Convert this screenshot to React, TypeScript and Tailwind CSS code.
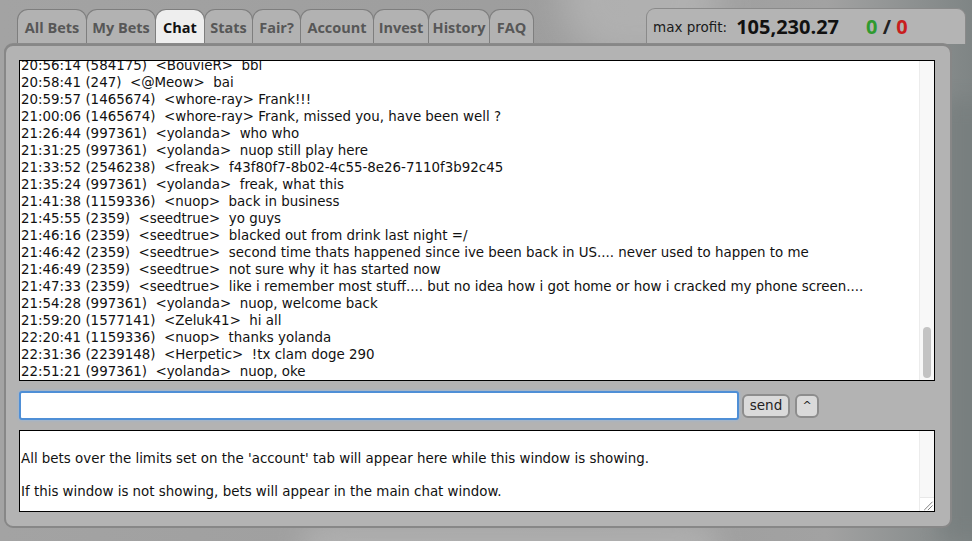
import React from "react";

const tabs = [
  { label: "All Bets", w: "w-[70px]" },
  { label: "My Bets", w: "w-[70px]" },
  { label: "Chat", w: "w-[50px]", active: true },
  { label: "Stats", w: "w-[49px]" },
  { label: "Fair?", w: "w-[49px]" },
  { label: "Account", w: "w-[74px]" },
  { label: "Invest", w: "w-[56px]" },
  { label: "History", w: "w-[62px]" },
  { label: "FAQ", w: "w-[45px]" },
];

const lines = [
  "20:56:14 (584175)  <BouvieR>  bbl",
  "20:58:41 (247)  <@Meow>  bai",
  "20:59:57 (1465674)  <whore-ray> Frank!!!",
  "21:00:06 (1465674)  <whore-ray> Frank, missed you, have been well ?",
  "21:26:44 (997361)  <yolanda>  who who",
  "21:31:25 (997361)  <yolanda>  nuop still play here",
  "21:33:52 (2546238)  <freak>  f43f80f7-8b02-4c55-8e26-7110f3b92c45",
  "21:35:24 (997361)  <yolanda>  freak, what this",
  "21:41:38 (1159336)  <nuop>  back in business",
  "21:45:55 (2359)  <seedtrue>  yo guys",
  "21:46:16 (2359)  <seedtrue>  blacked out from drink last night =/",
  "21:46:42 (2359)  <seedtrue>  second time thats happened since ive been back in US.... never used to happen to me",
  "21:46:49 (2359)  <seedtrue>  not sure why it has started now",
  "21:47:33 (2359)  <seedtrue>  like i remember most stuff.... but no idea how i got home or how i cracked my phone screen....",
  "21:54:28 (997361)  <yolanda>  nuop, welcome back",
  "21:59:20 (1577141)  <Zeluk41>  hi all",
  "22:20:41 (1159336)  <nuop>  thanks yolanda",
  "22:31:36 (2239148)  <Herpetic>  !tx clam doge 290",
  "22:51:21 (997361)  <yolanda>  nuop, oke",
];

function Tab({ label, w, active }: { label: string; w: string; active?: boolean }) {
  return (
    <div
      className={`${w} -ml-px first:ml-0 h-[35px] flex items-center justify-center pt-[1px] rounded-t-[11px] border-[1.5px] border-b-0 border-[#7e7e7e] text-[14.5px] font-bold ${
        active ? "bg-[#eeeeee] text-[#111] relative z-10" : "bg-[#b2b2b2] text-[#575757]"
      }`}
      style={{ fontFamily: '"Open Sans", "DejaVu Sans", sans-serif' }}
    >
      {label}
    </div>
  );
}

export default function App() {
  return (
    <div
      className="w-[972px] h-[541px] overflow-hidden relative bg-[linear-gradient(90deg,#a3a3a3_0%,#9d9d9d_60%,#a2a2a2_85%,#7f8585_100%)]"
      style={{ fontFamily: '"DejaVu Sans", Verdana, sans-serif' }}
    >
      {/* soft blurred backdrop shapes */}
      <div className="absolute left-[560px] top-[-60px] w-[160px] h-[120px] rounded-full bg-[#b8b8b8] blur-[18px] opacity-70" />
      <div className="absolute left-[300px] top-[520px] w-[420px] h-[60px] rounded-full bg-[#b5b5b5] blur-[14px] opacity-70" />
      <div className="absolute left-[940px] top-[100px] w-[60px] h-[440px] bg-[#767d7d] blur-[10px] opacity-70" />

      <div className="relative flex items-end h-[44px] pl-[17px]">
        {tabs.map((t) => (
          <Tab key={t.label} {...t} />
        ))}
        <div className="ml-auto mr-[6px] w-[320px] h-[36px] rounded-t-[9px] border-[1.5px] border-b-0 border-[#8a8a8a] bg-[#b4b4b4] flex items-center pl-[6px] pt-[1px]">
          <span className="text-[13.5px] text-[#1a1a1a]">max profit:</span>
          <span
            className="ml-[9px] text-[20px] font-bold text-[#111]"
            style={{ fontFamily: '"Open Sans", "DejaVu Sans", sans-serif' }}
          >
            105,230.27
          </span>
          <span
            className="ml-[27px] text-[20px] font-bold"
            style={{ fontFamily: '"Open Sans", "DejaVu Sans", sans-serif' }}
          >
            <span className="text-[#2f9a2f]">0</span>
            <span className="text-[#222]"> / </span>
            <span className="text-[#c81e1e]">0</span>
          </span>
        </div>
      </div>

      <div className="relative z-20 ml-[4px] w-[948px] h-[484px] rounded-[9px] border-2 border-[#878787] bg-[#b3b3b3] pt-[14px] pl-[13px] flex flex-col shadow-[0_-1px_0_#8a8a8a]">
        {/* chat log */}
        <div className="w-[916px] h-[321px] border border-black bg-white flex">
          <div className="flex-1 overflow-hidden flex flex-col justify-end pl-[1px] text-[13.4px] leading-[17px] text-[#111]">
            {lines.map((l, i) => (
              <div key={i} className="whitespace-pre">
                {l}
              </div>
            ))}
          </div>
          <div className="w-[15px] bg-[#f8f8f8] border-l border-[#ececec] flex flex-col justify-end items-center pb-[2px]">
            <div className="w-[8px] h-[51px] rounded-full bg-[#c3c3c3]" />
          </div>
        </div>

        {/* input row */}
        <div className="flex items-center mt-[10px] h-[29px]">
          <div className="w-[720px] h-[29px] rounded-[3px] border-2 border-[#4f8fd6] bg-white shadow-[0_0_3px_#8cb8ea]" />
          <button className="ml-[3px] w-[48px] h-[24px] rounded-[6px] border-2 border-[#8d8d8d] bg-[#dadada] text-[13.5px] text-[#222] leading-none">
            send
          </button>
          <button className="ml-[5px] w-[24px] h-[24px] rounded-[6px] border-2 border-[#8d8d8d] bg-[#dadada] text-[11px] text-[#222] leading-none">
            ^
          </button>
        </div>

        {/* big bets box */}
        <div className="mt-[10px] w-[916px] h-[82px] border border-black bg-white flex">
          <div className="flex-1 pt-[19px] pl-[1px] text-[13.4px] leading-[17px] text-[#111]">
            <div>All bets over the limits set on the 'account' tab will appear here while this window is showing.</div>
            <div className="mt-[16px]">If this window is not showing, bets will appear in the main chat window.</div>
          </div>
          <div className="w-[15px] bg-[#f8f8f8] border-l border-[#ececec] flex flex-col justify-end">
            <svg width="14" height="14" viewBox="0 0 14 14" className="bg-white border-t border-[#e8e8e8]">
              <line x1="4" y1="13" x2="13" y2="4" stroke="#777" strokeWidth="1" />
              <line x1="8" y1="13" x2="13" y2="8" stroke="#777" strokeWidth="1" />
            </svg>
          </div>
        </div>
      </div>
    </div>
  );
}
